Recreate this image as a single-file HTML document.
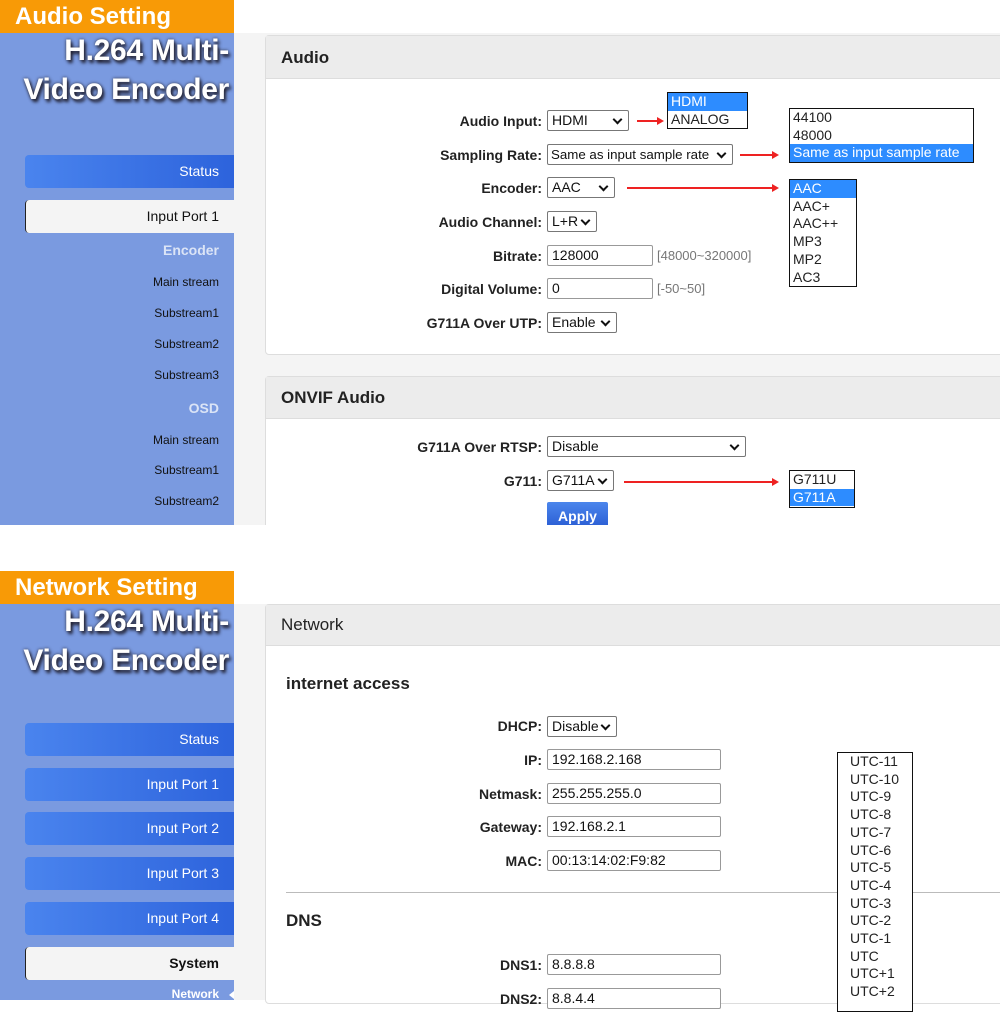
<!DOCTYPE html>
<html><head><meta charset="utf-8"><style>
*{margin:0;padding:0;box-sizing:border-box}
body{width:1000px;height:1000px;position:relative;overflow:hidden;background:#fff;font-family:"Liberation Sans",Arial,sans-serif;color:#222}
.a{position:absolute;white-space:nowrap}
.banner{background:#f89a06;color:#fff;font-weight:bold;font-size:24px;padding-left:15px;line-height:33px;width:234px;height:33px}
.side{background:#7a9ae0;width:234px}
.title{color:#fff;font-weight:bold;font-size:30px;text-align:right;width:229px;text-shadow:2px 3px 3px #223,0 0 3px #334;letter-spacing:-0.3px;font-family:"Liberation Sans",sans-serif}
.btn{left:25px;width:209px;height:33px;border-radius:4px 0 0 4px;background:linear-gradient(90deg,#4a84ee,#2d63dc);color:#fff;font-size:14px;text-align:right;padding-right:15px;line-height:33px}
.btn.w{background:#f4f4f4;color:#111;border-left:1px solid #222}
.sub{right:781px;font-size:12px;color:#111;text-align:right}
.grp{font-size:14px;font-weight:bold;color:#dbe4f6;text-align:right}
.gray{background:#f4f4f4}
.panel{background:#fff;border:1px solid #ddd;border-radius:4px}
.ph{background:#ececec;border-bottom:1px solid #ddd;font-size:17px;font-weight:bold;padding-left:15px;color:#222}
.lbl{font-weight:bold;text-align:right;width:300px;color:#222;font-family:"Liberation Sans",sans-serif;font-size:14px}
.sel,.inp{border:1px solid #777;border-radius:2px;font-size:14px;padding-left:4px;height:21px;line-height:19px;background:#fff;color:#111;overflow:hidden}
.sel::after{content:"";position:absolute;right:7px;top:5px;width:5px;height:5px;border-right:2px solid #111;border-bottom:2px solid #111;transform:rotate(45deg)}
.inp{border-color:#999}
.hint{font-size:13px;color:#777}
.list{border:1px solid #111;background:#fff;font-size:14px;line-height:17.7px}
.list div{padding-left:3px}
.hl{background:#2d8cff;color:#fff}
.arr{height:2px;background:#e22}
.arr::after{content:"";position:absolute;right:-2px;top:-3px;border-left:7px solid #e22;border-top:4px solid transparent;border-bottom:4px solid transparent}
</style></head><body>

<!-- TOP -->
<div class="a banner" style="left:0;top:0">Audio Setting</div>
<div class="a side" style="left:0;top:33px;height:492px"></div>
<div class="a title" style="left:0;top:34px">H.264 Multi-</div>
<div class="a title" style="left:0;top:73px">Video Encoder</div>
<div class="a btn" style="top:155px">Status</div>
<div class="a btn w" style="top:200px">Input Port 1</div>
<div class="a grp" style="right:781px;top:242px">Encoder</div>
<div class="a sub" style="top:275px">Main stream</div>
<div class="a sub" style="top:306px">Substream1</div>
<div class="a sub" style="top:337px">Substream2</div>
<div class="a sub" style="top:368px">Substream3</div>
<div class="a grp" style="right:781px;top:400px">OSD</div>
<div class="a sub" style="top:433px">Main stream</div>
<div class="a sub" style="top:463px">Substream1</div>
<div class="a sub" style="top:494px">Substream2</div>

<div class="a gray" style="left:234px;top:33px;width:766px;height:492px"></div>
<div class="a panel" style="left:265px;top:35px;width:740px;height:320px"><div class="ph" style="height:43px;line-height:43px">Audio</div></div>
<div class="a panel" style="left:265px;top:376px;width:740px;height:150px;border-bottom:none;border-radius:4px 4px 0 0"><div class="ph" style="height:42px;line-height:42px">ONVIF Audio</div></div>
<div class="a" style="left:0;top:525px;width:1000px;height:46px;background:#fff"></div>

<div class="a lbl" style="left:242px;top:113px">Audio Input:</div>
<div class="a sel" style="left:547px;top:110px;width:82px">HDMI</div>
<div class="a lbl" style="left:242px;top:147px">Sampling Rate:</div>
<div class="a sel" style="left:547px;top:144px;width:186px;font-size:13.3px;padding-left:3px">Same as input sample rate</div>
<div class="a lbl" style="left:242px;top:180px">Encoder:</div>
<div class="a sel" style="left:547px;top:177px;width:68px">AAC</div>
<div class="a lbl" style="left:242px;top:214px">Audio Channel:</div>
<div class="a sel" style="left:547px;top:211px;width:50px">L+R</div>
<div class="a lbl" style="left:242px;top:248px">Bitrate:</div>
<div class="a inp" style="left:547px;top:245px;width:106px">128000</div>
<div class="a hint" style="left:657px;top:248px">[48000~320000]</div>
<div class="a lbl" style="left:242px;top:281px">Digital Volume:</div>
<div class="a inp" style="left:547px;top:278px;width:106px">0</div>
<div class="a hint" style="left:657px;top:281px">[-50~50]</div>
<div class="a lbl" style="left:242px;top:315px">G711A Over UTP:</div>
<div class="a sel" style="left:547px;top:312px;width:70px">Enable</div>

<div class="a lbl" style="left:242px;top:439px">G711A Over RTSP:</div>
<div class="a sel" style="left:547px;top:436px;width:199px">Disable</div>
<div class="a lbl" style="left:242px;top:473px">G711:</div>
<div class="a sel" style="left:547px;top:470px;width:67px">G711A</div>
<div class="a" style="left:547px;top:502px;width:61px;height:23px;background:linear-gradient(#4c86ec,#2d61d6);color:#fff;font-weight:bold;font-size:14px;text-align:center;line-height:28px;border-radius:2px 2px 0 0">Apply</div>

<div class="a arr" style="left:637px;top:120px;width:25px"></div>
<div class="a arr" style="left:740px;top:154px;width:37px"></div>
<div class="a arr" style="left:627px;top:187px;width:150px"></div>
<div class="a arr" style="left:624px;top:481px;width:153px"></div>

<div class="a list" style="left:667px;top:92px;width:81px;height:37px"><div class="hl">HDMI</div><div>ANALOG</div></div>
<div class="a list" style="left:789px;top:108px;width:185px;height:55px"><div>44100</div><div>48000</div><div class="hl">Same as input sample rate</div></div>
<div class="a list" style="left:789px;top:179px;width:68px;height:108px"><div class="hl">AAC</div><div>AAC+</div><div>AAC++</div><div>MP3</div><div>MP2</div><div>AC3</div></div>
<div class="a list" style="left:789px;top:470px;width:66px;height:38px"><div>G711U</div><div class="hl">G711A</div></div>

<!-- BOTTOM -->
<div class="a banner" style="left:0;top:571px">Network Setting</div>
<div class="a side" style="left:0;top:604px;height:396px"></div>
<div class="a title" style="left:0;top:605px">H.264 Multi-</div>
<div class="a title" style="left:0;top:644px">Video Encoder</div>
<div class="a btn" style="top:723px">Status</div>
<div class="a btn" style="top:768px">Input Port 1</div>
<div class="a btn" style="top:812px">Input Port 2</div>
<div class="a btn" style="top:857px">Input Port 3</div>
<div class="a btn" style="top:902px">Input Port 4</div>
<div class="a btn w" style="top:947px;font-weight:bold">System</div>
<div class="a" style="right:781px;top:987px;font-size:12px;font-weight:bold;color:#fff">Network</div>
<div class="a" style="left:229px;top:991px;border-right:5px solid #fff;border-top:4px solid transparent;border-bottom:4px solid transparent"></div>

<div class="a gray" style="left:234px;top:604px;width:766px;height:396px"></div>
<div class="a panel" style="left:265px;top:604px;width:740px;height:400px"><div class="ph" style="height:41px;line-height:40px;font-weight:normal;font-size:17px">Network</div></div>
<div class="a" style="left:286px;top:674px;font-size:17px;font-weight:bold">internet access</div>
<div class="a lbl" style="left:242px;top:718px">DHCP:</div>
<div class="a sel" style="left:547px;top:716px;width:70px">Disable</div>
<div class="a lbl" style="left:242px;top:752px">IP:</div>
<div class="a inp" style="left:547px;top:749px;width:174px">192.168.2.168</div>
<div class="a lbl" style="left:242px;top:786px">Netmask:</div>
<div class="a inp" style="left:547px;top:783px;width:174px">255.255.255.0</div>
<div class="a lbl" style="left:242px;top:819px">Gateway:</div>
<div class="a inp" style="left:547px;top:816px;width:174px">192.168.2.1</div>
<div class="a lbl" style="left:242px;top:853px">MAC:</div>
<div class="a inp" style="left:547px;top:850px;width:174px">00:13:14:02:F9:82</div>
<div class="a" style="left:286px;top:892px;width:714px;height:1px;background:#bbb"></div>
<div class="a" style="left:286px;top:911px;font-size:17px;font-weight:bold">DNS</div>
<div class="a lbl" style="left:242px;top:957px">DNS1:</div>
<div class="a inp" style="left:547px;top:954px;width:174px">8.8.8.8</div>
<div class="a lbl" style="left:242px;top:991px">DNS2:</div>
<div class="a inp" style="left:547px;top:988px;width:174px">8.8.4.4</div>

<div class="a list" style="left:837px;top:752px;width:76px;height:260px;padding-left:9px"><div>UTC-11</div><div>UTC-10</div><div>UTC-9</div><div>UTC-8</div><div>UTC-7</div><div>UTC-6</div><div>UTC-5</div><div>UTC-4</div><div>UTC-3</div><div>UTC-2</div><div>UTC-1</div><div>UTC</div><div>UTC+1</div><div>UTC+2</div></div>
</body></html>
